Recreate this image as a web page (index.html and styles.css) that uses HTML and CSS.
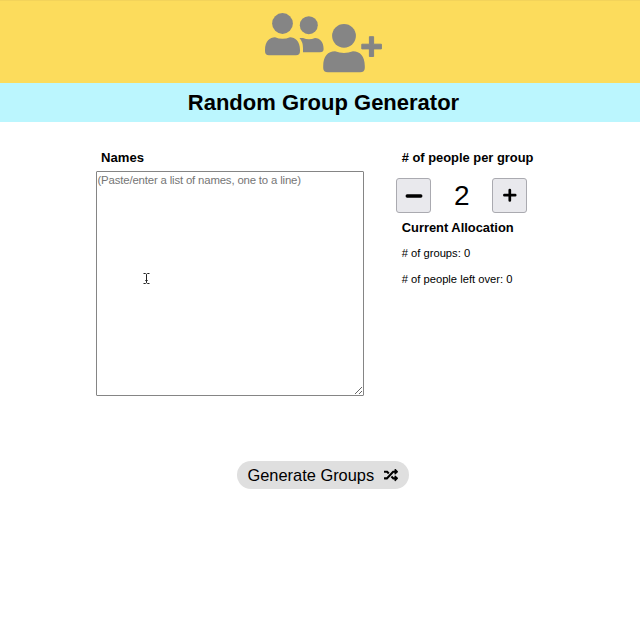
FILE: index.html
```html
<!DOCTYPE html>
<html lang="en">
<head>
<meta charset="utf-8">
<title>Random Group Generator</title>
<link rel="stylesheet" href="styles.css">
</head>
<body>
<header class="banner">
  <svg class="logo" viewBox="0 0 118 60" aria-hidden="true">
    <circle cx="17.5" cy="10.5" r="10.4"/>
    <path d="M0 37C0 28 5 24.3 10 24.3Q17.5 27.3 25 24.3C30 24.3 35 28 35 37V38Q35 42.3 31 42.3H4Q0 42.3 0 38Z"/>
    <circle cx="43.8" cy="12.2" r="9"/>
    <path d="M34.5 25H38Q44 27.5 50 25C55 25 58.6 29 58.6 36Q58.6 39.3 55 39.3H38V35Q38 29 34.5 25Z"/>
    <circle cx="79" cy="22.8" r="11.9"/>
    <path d="M58.2 53C58.2 43 63 38.2 70 38.2Q79 41.6 88 38.2C95 38.2 99.8 43 99.8 53V55Q99.8 59.2 95 59.2H63Q58.2 59.2 58.2 55Z"/>
    <path d="M104.4 23.7H108.6V31.2H116.4V35.9H108.6V43.5H104.4V35.9H96.8V31.2H104.4Z" stroke="#858585" stroke-linejoin="round"/>
  </svg>
</header>
<h1 class="title">Random Group Generator</h1>
<main class="main">
  <section class="names">
    <label class="heading" for="names">Names</label>
    <textarea id="names" class="names-input" placeholder="(Paste/enter a list of names, one to a line)"></textarea>
    <svg class="cursor" viewBox="0 0 7 11" aria-hidden="true"><path d="M.5.5H2.5L3.5 1.3L4.5.5H6.5M3.5 1.3V9.7M.5 10.5H2.5L3.5 9.7L4.5 10.5H6.5M2.3 7.5H4.7"/></svg>
  </section>
  <section class="settings">
    <h2 class="heading">#&nbsp;of people per group</h2>
    <div class="stepper">
      <button class="step" aria-label="Fewer"><svg viewBox="0 0 18 18"><path d="M2.2 9H15.8" stroke-width="3.3"/></svg></button>
      <span class="count">2</span>
      <button class="step" aria-label="More"><svg viewBox="0 0 18 18"><path d="M3.4 8.2H14.2M8.8 3V13.4" stroke-width="2.7"/></svg></button>
    </div>
    <h2 class="heading">Current Allocation</h2>
    <p class="stat"># of groups: 0</p>
    <p class="stat"># of people left over: 0</p>
  </section>
</main>
<div class="actions">
  <button class="generate">Generate Groups
    <svg class="shuffle" viewBox="0 0 512 512" aria-hidden="true"><path d="M504.971 359.029c9.373 9.373 9.373 24.569 0 33.941l-80 79.984c-15.01 15.01-40.971 4.49-40.971-16.971V416h-58.785a12.004 12.004 0 0 1-8.773-3.812l-70.556-75.596 53.333-57.143L352 336h32v-39.981c0-21.438 25.943-31.998 40.971-16.971l80 79.981zM12 176h84l52.781 56.551 53.333-57.143-70.556-75.596A11.999 11.999 0 0 0 122.785 96H12c-6.627 0-12 5.373-12 12v56c0 6.627 5.373 12 12 12zm372 0v39.984c0 21.46 25.961 31.98 40.971 16.971l80-79.984c9.373-9.373 9.373-24.569 0-33.941l-80-79.981C409.943 24.021 384 34.582 384 56.019V96h-58.785a12.004 12.004 0 0 0-8.773 3.812L96 336H12c-6.627 0-12 5.373-12 12v56c0 6.627 5.373 12 12 12h110.785c3.326 0 6.503-1.381 8.773-3.812L352 176h32z"/></svg>
  </button>
</div>
</body>
</html>
```
FILE: styles.css
```css
* { box-sizing: border-box; }

body {
  margin: 0;
  background: #fff;
  color: #000;
  font-family: "Liberation Sans", Arial, sans-serif;
}

.banner {
  height: 83px;
  padding-top: 13px;
  padding-left: 7px;
  border-top: 1px solid #f3d35a;
  background: #fcdc5c;
  text-align: center;
}

.logo {
  display: block;
  width: 118px;
  height: 60px;
  margin: -1px auto 0;
  fill: #858585;
}

.title {
  height: 39px;
  margin: 0;
  padding-left: 7px;
  background: #bbf6fe;
  font-size: 22px;
  line-height: 40px;
  text-align: center;
}

.main {
  display: flex;
  gap: 33px;
  padding: 27px 0 0 95.5px;
}

.names {
  position: relative;
  width: 268px;
}

.heading {
  display: block;
  margin: 0;
  padding-left: 5.5px;
  font-size: 13.1px;
  font-weight: bold;
  line-height: 17px;
}

.names-input {
  display: block;
  width: 268px;
  height: 225px;
  margin-top: 4.5px;
  padding: 1px;
  border: 1px solid #858585;
  border-radius: 1px;
  font: 11.4px/15px "Liberation Sans", Arial, sans-serif;
  letter-spacing: -0.17px;
}

.names-input::placeholder { color: #757575; }

.cursor {
  position: absolute;
  top: 124px;
  left: 47.5px;
  width: 7px;
  height: 11px;
  fill: none;
  stroke: #222;
}

.settings { width: 160px; }

.stepper {
  display: flex;
  align-items: center;
  margin-top: 12px;
  margin-bottom: 6px;
}

.step {
  display: flex;
  align-items: center;
  justify-content: center;
  width: 35px;
  height: 35px;
  padding: 0;
  border: 1px solid #aaaab0;
  border-radius: 3px;
  background: #e9e9ed;
}

.step svg {
  width: 18px;
  height: 18px;
  fill: none;
  stroke: #000;
  stroke-linecap: round;
}

.count {
  width: 61px;
  font-size: 28px;
  line-height: 35px;
  text-align: center;
}

.settings { margin-left: -0.3px; }

.settings .heading { font-size: 12.9px; }

.stat {
  margin: 10px 0 0 5.5px;
  font-size: 11.2px;
  line-height: 14px;
}

.stat + .stat { margin-top: 12px; }

.actions {
  display: flex;
  justify-content: center;
  padding: 65.5px 0 0 6px;
}

.generate {
  display: flex;
  align-items: center;
  gap: 10px;
  width: 172px;
  height: 28px;
  padding: 0 10.5px;
  border: 0;
  border-radius: 14px;
  background: #dfdfdf;
  color: #000;
  font: 16.4px/28px "Liberation Sans", Arial, sans-serif;
  white-space: nowrap;
}

.shuffle {
  flex: none;
  width: 14px;
  height: 14px;
}
```
